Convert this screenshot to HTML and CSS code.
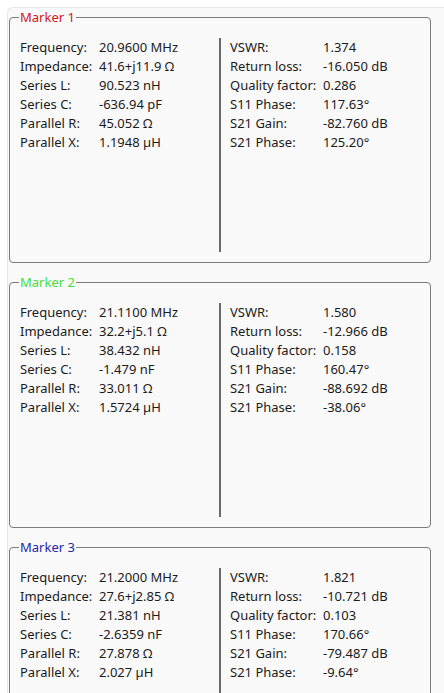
FILE: index.html
```html
<!DOCTYPE html>
<html lang="en">
<head>
    <meta charset="UTF-8">
    <meta name="viewport" content="width=device-width, initial-scale=1.0">
    <title>Markers</title>
    <link rel="stylesheet" href="styles.css">
</head>
<body>
    <div class="panel" id="markers"></div>

    <script>
        const markers = [
            {
                name: "Marker 1", color: "red",
                left: [
                    ["Frequency:", "20.9600 MHz"],
                    ["Impedance:", "41.6+j11.9 Ω"],
                    ["Series L:", "90.523 nH"],
                    ["Series C:", "-636.94 pF"],
                    ["Parallel R:", "45.052 Ω"],
                    ["Parallel X:", "1.1948 µH"]
                ],
                right: [
                    ["VSWR:", "1.374"],
                    ["Return loss:", "-16.050 dB"],
                    ["Quality factor:", "0.286"],
                    ["S11 Phase:", "117.63°"],
                    ["S21 Gain:", "-82.760 dB"],
                    ["S21 Phase:", "125.20°"]
                ]
            },
            {
                name: "Marker 2", color: "green",
                left: [
                    ["Frequency:", "21.1100 MHz"],
                    ["Impedance:", "32.2+j5.1 Ω"],
                    ["Series L:", "38.432 nH"],
                    ["Series C:", "-1.479 nF"],
                    ["Parallel R:", "33.011 Ω"],
                    ["Parallel X:", "1.5724 µH"]
                ],
                right: [
                    ["VSWR:", "1.580"],
                    ["Return loss:", "-12.966 dB"],
                    ["Quality factor:", "0.158"],
                    ["S11 Phase:", "160.47°"],
                    ["S21 Gain:", "-88.692 dB"],
                    ["S21 Phase:", "-38.06°"]
                ]
            },
            {
                name: "Marker 3", color: "blue",
                left: [
                    ["Frequency:", "21.2000 MHz"],
                    ["Impedance:", "27.6+j2.85 Ω"],
                    ["Series L:", "21.381 nH"],
                    ["Series C:", "-2.6359 nF"],
                    ["Parallel R:", "27.878 Ω"],
                    ["Parallel X:", "2.027 µH"]
                ],
                right: [
                    ["VSWR:", "1.821"],
                    ["Return loss:", "-10.721 dB"],
                    ["Quality factor:", "0.103"],
                    ["S11 Phase:", "170.66°"],
                    ["S21 Gain:", "-79.487 dB"],
                    ["S21 Phase:", "-9.64°"]
                ]
            }
        ];

        function rows(list) {
            let html = "";
            list.forEach(item => {
                html += `<dt>${item[0]}</dt><dd>${item[1]}</dd>`;
            });
            return html;
        }

        function loadMarkers() {
            let html = "";
            markers.forEach(marker => {
                html += `
                    <fieldset class="marker">
                        <legend class="${marker.color}">${marker.name}</legend>
                        <div class="cols">
                            <dl class="info left">${rows(marker.left)}</dl>
                            <dl class="info right">${rows(marker.right)}</dl>
                        </div>
                    </fieldset>
                `;
            });
            document.getElementById("markers").innerHTML = html;
        }

        loadMarkers();
    </script>
</body>
</html>
```

FILE: styles.css
```css
body {
    margin: 0;
    background-color: #ffffff;
    font-family: "Noto Sans", sans-serif;
    font-size: 13px;
    color: #1b1b1b;
}
.panel {
    margin: 7px 0 0 7px;
    padding: 0 0 0 1px;
    background-color: #f9f9f9;
    border-top: 1px solid #e6e6e6;
    border-left: 1px solid #e6e6e6;
    border-top-left-radius: 6px;
    height: 685px;
    overflow: hidden;
}
.marker {
    width: 422px;
    box-sizing: border-box;
    margin: 0 0 10px 0;
    padding: 12px 0 10px 10px;
    border: 1px solid #7c7c7c;
    border-radius: 4px;
}
.marker legend {
    margin-left: -1px;
    padding: 0 1px;
    line-height: 18px;
}
.red {
    color: #d0151d;
}
.green {
    color: #3fdf3f;
}
.blue {
    color: #2626a6;
}
.cols {
    display: grid;
    grid-template-columns: 199px 1fr;
    height: 214px;
}
.info {
    margin: 0;
    display: grid;
    align-content: start;
    line-height: 19px;
}
.info dd {
    margin: 0;
}
.left {
    grid-template-columns: 79px 1fr;
}
.right {
    grid-template-columns: 93px 1fr;
    border-left: 2px solid #6a6a6a;
    padding-left: 9px;
}
```
